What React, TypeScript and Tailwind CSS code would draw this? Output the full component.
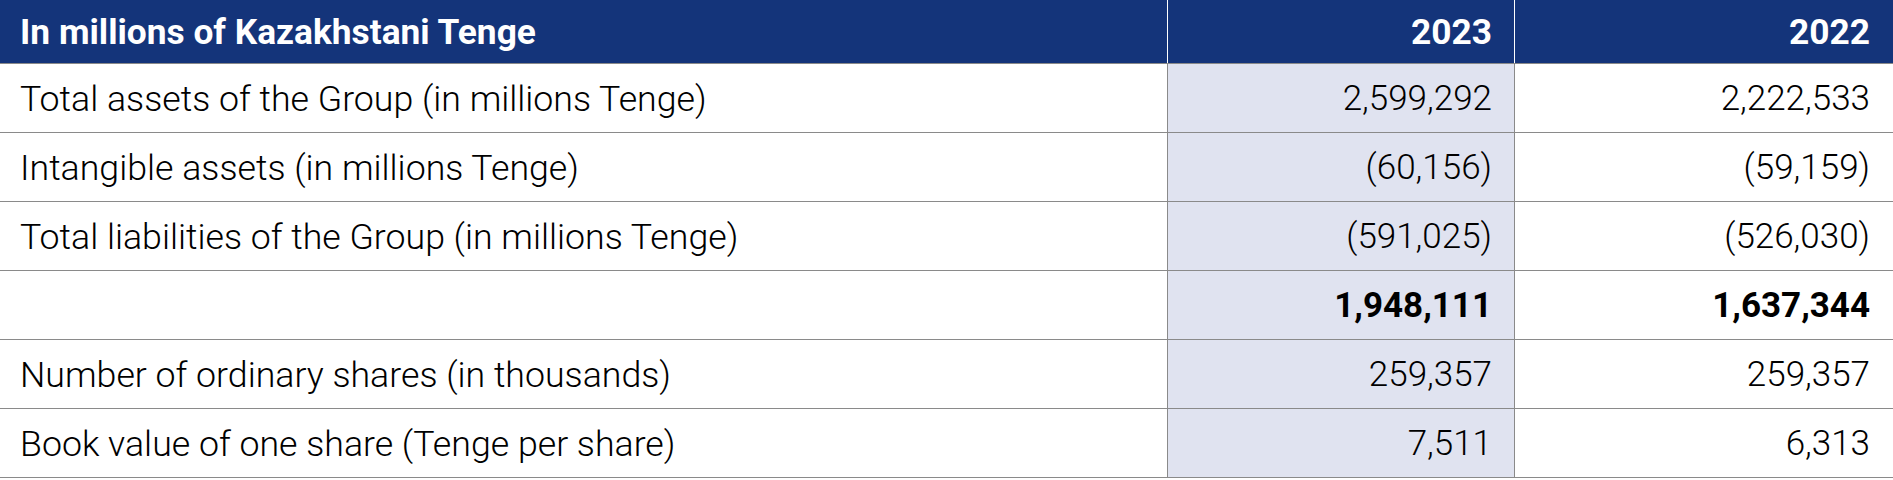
import React from "react"

type Row = {
  label: string
  y2023: string
  y2022: string
  bold?: boolean
}

const ROWS: Row[] = [
  { label: "Total assets of the Group (in millions Tenge)", y2023: "2,599,292", y2022: "2,222,533" },
  { label: "Intangible assets (in millions Tenge)", y2023: "(60,156)", y2022: "(59,159)" },
  { label: "Total liabilities of the Group (in millions Tenge)", y2023: "(591,025)", y2022: "(526,030)" },
  { label: "", y2023: "1,948,111", y2022: "1,637,344", bold: true },
  { label: "Number of ordinary shares (in thousands)", y2023: "259,357", y2022: "259,357" },
  { label: "Book value of one share (Tenge per share)", y2023: "7,511", y2022: "6,313" },
]

export default function App() {
  return (
    <div className="w-[1893px] bg-white font-['Roboto',sans-serif] text-black">
      <div className="grid h-[64px] grid-cols-[1167px_347px_1fr] border-b border-[#8a8a8a] bg-[#14347a] text-[35.3px] font-bold text-white">
        <div className="flex items-center pl-[20px] pt-[2px]">In millions of Kazakhstani Tenge</div>
        <div className="flex items-center justify-end border-l border-white pr-[22px] pt-[2px]">2023</div>
        <div className="flex items-center justify-end border-l border-white pr-[23px] pt-[2px]">2022</div>
      </div>
      {ROWS.map((row, i) => (
        <div
          key={i}
          className="grid h-[69px] grid-cols-[1167px_347px_1fr] border-b border-[#8a8a8a] text-[35px] font-light"
        >
          <div className="flex items-center pl-[20px] pt-[3px] text-[35.7px]">{row.label}</div>
          <div
            className={`flex items-center justify-end border-l border-[#8a8a8a] bg-[#e0e3f0] pr-[22px] pt-[3px] ${row.bold ? "font-bold" : ""}`}
          >
            {row.y2023}
          </div>
          <div
            className={`flex items-center justify-end border-l border-[#8a8a8a] pr-[23px] pt-[3px] ${row.bold ? "font-bold" : ""}`}
          >
            {row.y2022}
          </div>
        </div>
      ))}
    </div>
  )
}
